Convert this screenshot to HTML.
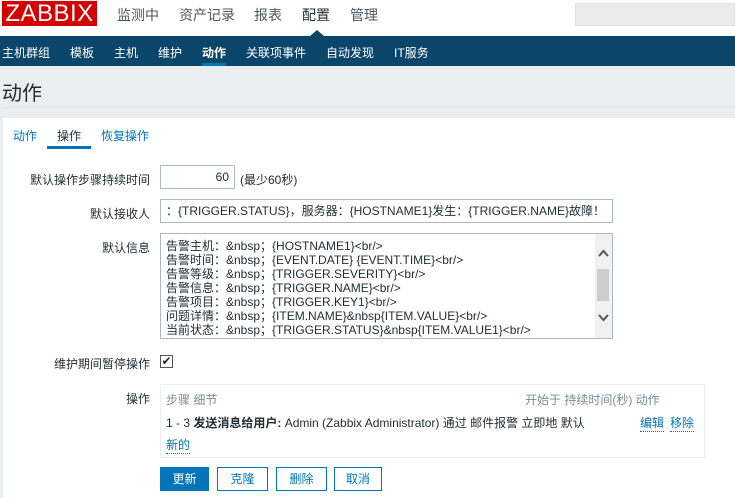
<!DOCTYPE html>
<html><head><meta charset="utf-8"><style>
*{margin:0;padding:0;box-sizing:border-box}
body{width:735px;height:498px;overflow:hidden;background:#ebeef0;font-family:"Liberation Sans","Noto Sans CJK SC",sans-serif;font-size:12px;color:#1f2c33;position:relative}
.a{position:absolute;white-space:nowrap}
#hdr{left:0;top:0;width:735px;height:36px;background:#fff}
.logo{left:2px;top:1px;width:95px;height:25px;background:#d40000;color:#fff;font-size:24px;line-height:26px;text-align:center;letter-spacing:0.5px}
.top{top:5px;font-size:14px;color:#4a5860}
#nav{left:0;top:36px;width:735px;height:30px;background:#0a466a}
.n{top:44px;color:#fff;font-size:12px}
.lbl{font-size:12px;color:#1f2c33;text-align:right;width:150px;left:0}
.btn{position:absolute;top:467px;height:24px;border:1px solid #0275b8;color:#0275b8;background:#fff;font-size:12px;line-height:22px;text-align:center}
.link{color:#0275b8;border-bottom:1px dotted #0275b8}
</style></head><body>
<div class="a" id="hdr"></div>
<div class="a logo">ZABBIX</div>
<div class="a top" style="left:117px">监测中</div>
<div class="a top" style="left:179px">资产记录</div>
<div class="a top" style="left:254px">报表</div>
<div class="a top" style="left:302px;color:#1f2c33">配置</div>
<div class="a top" style="left:350px">管理</div>
<div class="a" style="left:575px;top:3px;width:160px;height:23px;background:#ebebeb;border:1px solid #e0e0e0"></div>
<div class="a" id="nav"></div>
<div class="a" style="left:310px;top:30px;width:0;height:0;border-left:7px solid transparent;border-right:7px solid transparent;border-bottom:6px solid #0a466a"></div>
<div class="a n" style="left:2px">主机群组</div>
<div class="a n" style="left:70px">模板</div>
<div class="a n" style="left:114px">主机</div>
<div class="a n" style="left:158px">维护</div>
<div class="a n" style="left:202px;font-weight:bold">动作</div>
<div class="a" style="left:202px;top:63px;width:24px;height:3px;background:#0275b8"></div>
<div class="a n" style="left:246px">关联项事件</div>
<div class="a n" style="left:326px">自动发现</div>
<div class="a n" style="left:394px">IT服务</div>
<div class="a" style="left:2px;top:77px;font-size:20px;color:#1f2c33">动作</div>
<div class="a" style="left:2px;top:107px;width:733px;height:1px;background:#dfe4e7"></div>
<div class="a" style="left:3px;top:118px;width:732px;height:380px;background:#fff"></div>
<div class="a" style="left:13px;top:127px;color:#0275b8">动作</div>
<div class="a" style="left:57px;top:127px">操作</div>
<div class="a" style="left:47px;top:146px;width:44px;height:3px;background:#0275b8"></div>
<div class="a" style="left:101px;top:127px;color:#0275b8">恢复操作</div>
<div class="a lbl" style="top:171px">默认操作步骤持续时间</div>
<div class="a" style="left:160px;top:165px;width:75px;height:24px;border:1px solid #acbbc2;text-align:right;padding-right:5px;line-height:22px">60</div>
<div class="a" style="left:240px;top:171px">(最少60秒)</div>
<div class="a lbl" style="top:205px">默认接收人</div>
<div class="a" style="left:160px;top:199px;width:453px;height:24px;border:1px solid #acbbc2;line-height:22px;padding-left:5px;overflow:hidden">：{TRIGGER.STATUS}，服务器：{HOSTNAME1}发生：{TRIGGER.NAME}故障！</div>
<div class="a lbl" style="top:239px">默认信息</div>
<div class="a" style="left:160px;top:233px;width:453px;height:106px;border:1px solid #acbbc2;overflow:hidden">
<div style="position:absolute;left:5px;top:5px;line-height:14px;font-size:12px">告警主机：&amp;nbsp；{HOSTNAME1}&lt;br/&gt;<br>告警时间：&amp;nbsp；{EVENT.DATE} {EVENT.TIME}&lt;br/&gt;<br>告警等级：&amp;nbsp；{TRIGGER.SEVERITY}&lt;br/&gt;<br>告警信息：&amp;nbsp；{TRIGGER.NAME}&lt;br/&gt;<br>告警项目：&amp;nbsp；{TRIGGER.KEY1}&lt;br/&gt;<br>问题详情：&amp;nbsp；{ITEM.NAME}&amp;nbsp{ITEM.VALUE}&lt;br/&gt;<br>当前状态：&amp;nbsp；{TRIGGER.STATUS}&amp;nbsp{ITEM.VALUE1}&lt;br/&gt;<br>事件ID：&amp;nbsp；{EVENT.ID}</div>
<div style="position:absolute;right:0;top:0;width:17px;height:104px;background:#f0f0f0"></div>
<div style="position:absolute;right:3px;top:35px;width:12px;height:32px;background:#cdcdcd"></div>
<svg style="position:absolute;right:3px;top:15px" width="11" height="8"><path d="M1 7 L5.5 2 L10 7" stroke="#555" stroke-width="2" fill="none"/></svg>
<svg style="position:absolute;right:3px;top:80px" width="11" height="8"><path d="M1 1 L5.5 6 L10 1" stroke="#555" stroke-width="2" fill="none"/></svg>
</div>
<div class="a lbl" style="top:355px">维护期间暂停操作</div>
<div class="a" style="left:160px;top:355px;width:13px;height:13px;border:1px solid #555;font-size:12px;line-height:11px;text-align:center">✔</div>
<div class="a lbl" style="top:390px">操作</div>
<div class="a" style="left:160px;top:384px;width:545px;height:74px;border:1px solid #ebeef0"></div>
<div class="a" style="left:166px;top:391px;color:#768d99">步骤 细节</div>
<div class="a" style="left:525px;top:391px;color:#768d99">开始于 持续时间(秒) 动作</div>
<div class="a" style="left:166px;top:414px">1 - 3 <b>发送消息给用户:</b> Admin (Zabbix Administrator) 通过 邮件报警 立即地 默认</div>
<div class="a link" style="left:640px;top:414px">编辑</div>
<div class="a link" style="left:670px;top:414px">移除</div>
<div class="a link" style="left:166px;top:436px">新的</div>
<div class="btn" style="left:160px;width:49px;background:#0275b8;color:#fff">更新</div>
<div class="btn" style="left:217px;width:51px">克隆</div>
<div class="btn" style="left:276px;width:51px">删除</div>
<div class="btn" style="left:334px;width:48px">取消</div>
</body></html>
